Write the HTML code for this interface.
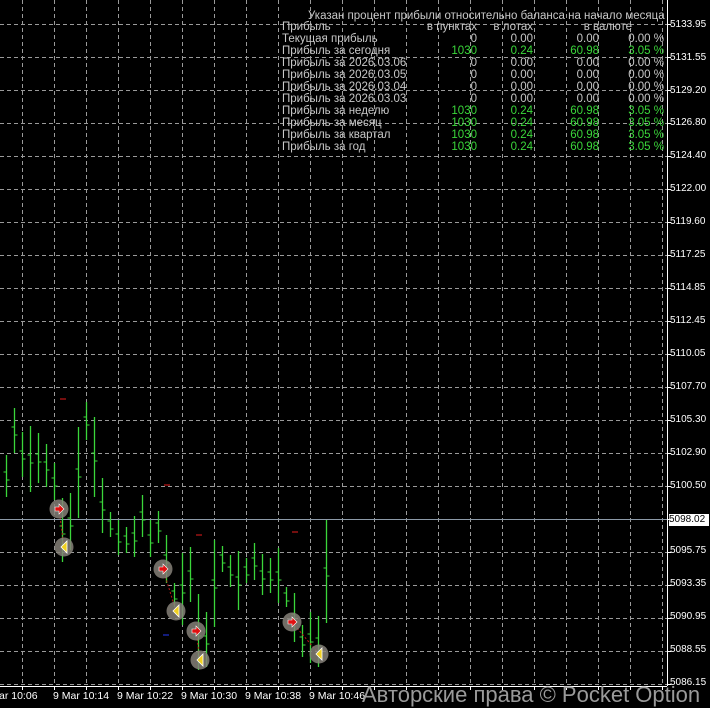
<!DOCTYPE html>
<html><head><meta charset="utf-8"><style>
html,body{margin:0;padding:0;background:#000;}
body{width:710px;height:707px;overflow:hidden;position:relative;font-family:"Liberation Sans",sans-serif;}
svg{position:absolute;left:0;top:0;}
.t{position:absolute;font-size:11.5px;line-height:12px;color:#c8c8c8;white-space:nowrap;}
.g{color:#3ad63a;}
.r{text-align:right;}
.p{position:absolute;left:670px;font-size:10px;color:#fff;}
.x{position:absolute;top:690px;color:#fff;font-size:10.5px;white-space:nowrap;}
</style></head><body>
<svg id="s" width="710" height="707"></svg>
<div class="t" style="left:308px;top:10px;width:356px;text-align:right;">Указан процент прибыли относительно баланса на начало месяца</div>
<div class="t" style="left:282px;top:21px;width:382px;height:140px;">
<div style="position:absolute;left:0;top:0;">Прибыль<br>Текущая прибыль<br>Прибыль за сегодня<br>Прибыль за 2026.03.06<br>Прибыль за 2026.03.05<br>Прибыль за 2026.03.04<br>Прибыль за 2026.03.03<br>Прибыль за неделю<br>Прибыль за месяц<br>Прибыль за квартал<br>Прибыль за год</div>
<div class="r" style="position:absolute;right:187px;top:0;">в пунктах<br>0<br><span class="g">1030</span><br>0<br>0<br>0<br>0<br><span class="g">1030</span><br><span class="g">1030</span><br><span class="g">1030</span><br><span class="g">1030</span></div>
<div class="r" style="position:absolute;right:131px;top:0;">в лотах<br>0.00<br><span class="g">0.24</span><br>0.00<br>0.00<br>0.00<br>0.00<br><span class="g">0.24</span><br><span class="g">0.24</span><br><span class="g">0.24</span><br><span class="g">0.24</span></div>
<div class="r" style="position:absolute;right:65px;top:0;"><span style="position:relative;left:33px">в валюте</span><br>0.00<br><span class="g">60.98</span><br>0.00<br>0.00<br>0.00<br>0.00<br><span class="g">60.98</span><br><span class="g">60.98</span><br><span class="g">60.98</span><br><span class="g">60.98</span></div>
<div class="r" style="position:absolute;right:0;top:0;"><br>0.00 %<br><span class="g">3.05 %</span><br>0.00 %<br>0.00 %<br>0.00 %<br>0.00 %<br><span class="g">3.05 %</span><br><span class="g">3.05 %</span><br><span class="g">3.05 %</span><br><span class="g">3.05 %</span></div>
</div>
<div class="p" style="top:19px">5133.95</div>
<div class="p" style="top:52px">5131.55</div>
<div class="p" style="top:85px">5129.20</div>
<div class="p" style="top:117px">5126.80</div>
<div class="p" style="top:150px">5124.40</div>
<div class="p" style="top:183px">5122.00</div>
<div class="p" style="top:216px">5119.60</div>
<div class="p" style="top:249px">5117.25</div>
<div class="p" style="top:282px">5114.85</div>
<div class="p" style="top:315px">5112.45</div>
<div class="p" style="top:348px">5110.05</div>
<div class="p" style="top:381px">5107.70</div>
<div class="p" style="top:414px">5105.30</div>
<div class="p" style="top:447px">5102.90</div>
<div class="p" style="top:480px">5100.50</div>
<div class="p" style="top:514px;left:669px;width:40px;background:#fff;color:#000;height:12px;line-height:12px;">5098.02</div>
<div class="p" style="top:545px">5095.75</div>
<div class="p" style="top:578px">5093.35</div>
<div class="p" style="top:611px">5090.95</div>
<div class="p" style="top:644px">5088.55</div>
<div class="p" style="top:677px">5086.15</div>
<div class="x" style="left:-1px;">ar 10:06</div>
<div class="x" style="left:53px;">9 Mar 10:14</div>
<div class="x" style="left:117px;">9 Mar 10:22</div>
<div class="x" style="left:181px;">9 Mar 10:30</div>
<div class="x" style="left:245px;">9 Mar 10:38</div>
<div class="x" style="left:309px;">9 Mar 10:46</div>
<div class="t" style="left:362px;top:682px;font-size:22px;line-height:26px;color:#9a9a9a;">Авторские права © Pocket Option</div>
<script>
var s=document.getElementById('s'),h='';
for(var x=22;x<667;x+=32)h+='<line x1="'+(x+.5)+'" y1="0" x2="'+(x+.5)+'" y2="685" stroke="#9a9a9a" stroke-dasharray="4,3"/>';
for(var i=0;i<21;i++){var y=Math.round(24+i*32.98)+.5;h+='<line x1="0" y1="'+y+'" x2="667" y2="'+y+'" stroke="#9a9a9a" stroke-dasharray="4,3"/><line x1="667" y1="'+y+'" x2="671" y2="'+y+'" stroke="#fff"/>';}
h+='<line x1="0" y1="519.5" x2="667" y2="519.5" stroke="#8c9aa8"/>';
h+='<line x1="667.5" y1="0" x2="667.5" y2="686" stroke="#fff"/><line x1="0" y1="686.5" x2="667" y2="686.5" stroke="#fff"/>';
for(var x=22;x<667;x+=32)h+='<line x1="'+(x+.5)+'" y1="686" x2="'+(x+.5)+'" y2="690" stroke="#fff"/>';
var b=[[7,455,497],[15,408,453],[23,432,477],[31,426,492],[39,433,483],[47,444,487],[55,463,500],[63,498,562],[71,493,550],[79,427,518],[87,402,440],[95,417,497],[103,478,533],[111,512,537],[119,520,555],[127,527,553],[135,516,557],[143,495,537],[151,520,557],[159,511,543],[167,535,583],[175,583,607],[183,553,625],[191,547,602],[199,594,670],[207,612,667],[215,540,627],[223,546,572],[231,555,587],[239,551,610],[247,558,583],[255,543,580],[263,554,595],[271,558,593],[279,548,603],[287,587,607],[295,593,642],[303,625,657],[311,612,663],[319,616,667],[327,520,623]];
b.forEach(function(c,i){var x=c[0]-0.5;var m=Math.round((c[1]+c[2])/2);h+='<line x1="'+x+'" y1="'+c[1]+'" x2="'+x+'" y2="'+c[2]+'" stroke="#3ad63a" stroke-width="1.3"/><line x1="'+(x-3)+'" y1="'+(m-4)+'" x2="'+x+'" y2="'+(m-4)+'" stroke="#3ad63a"/><line x1="'+x+'" y1="'+(m+4)+'" x2="'+(x+3)+'" y2="'+(m+4)+'" stroke="#3ad63a"/>';});
[[63,399],[167,485],[199,535],[295,532]].forEach(function(p){h+='<line x1="'+(p[0]-3)+'" y1="'+p[1]+'" x2="'+(p[0]+3)+'" y2="'+p[1]+'" stroke="#c01818" stroke-width="1.2"/>';});
h+='<line x1="163" y1="635" x2="169" y2="635" stroke="#2030d0" stroke-width="1.2"/>';
[[[59,509],[64,547]],[[163,569],[176,611]],[[196,631],[200,660]],[[292,622],[319,654]]].forEach(function(pr){h+='<line x1="'+pr[0][0]+'" y1="'+pr[0][1]+'" x2="'+pr[1][0]+'" y2="'+pr[1][1]+'" stroke="#c01818" stroke-dasharray="2,2"/>';});
[[59,509],[163,569],[196,631],[292,622]].forEach(function(p){h+='<circle cx="'+p[0]+'" cy="'+p[1]+'" r="9.5" fill="#858078" fill-opacity="0.85"/><path d="M'+(p[0]-4)+' '+(p[1]-2)+'h4v-3l5 5-5 5v-3h-4z" fill="#e01010" stroke="#fff" stroke-width="0.6"/>';});
[[64,547],[176,611],[200,660],[319,654]].forEach(function(p){h+='<circle cx="'+p[0]+'" cy="'+p[1]+'" r="9.5" fill="#858078" fill-opacity="0.85"/><path d="M'+(p[0]+3)+' '+(p[1]-6)+'v12l-6-6z" fill="#f0d020" stroke="#fff" stroke-width="0.8"/>';});
s.innerHTML=h;
</script>
</body></html>
